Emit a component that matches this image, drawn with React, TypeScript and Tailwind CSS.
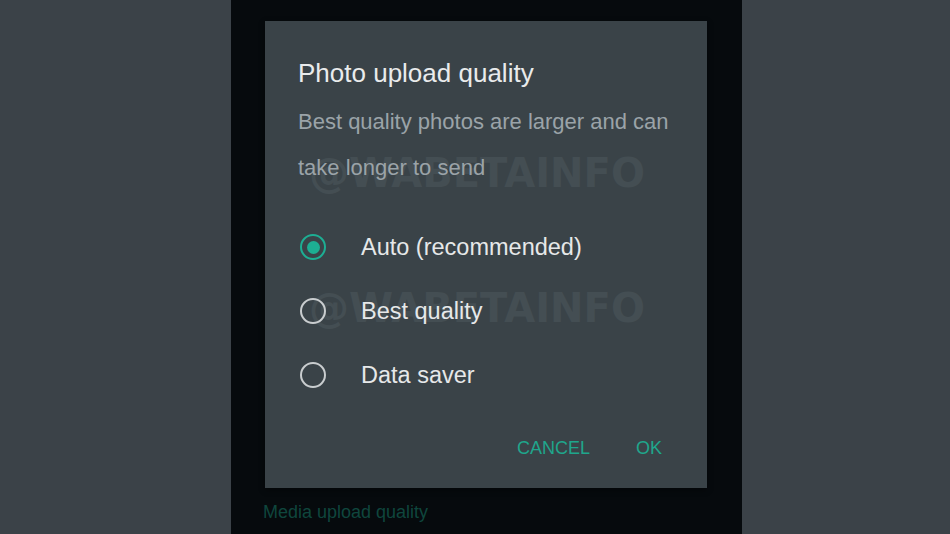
import { useState } from 'react';

const options = ['Auto (recommended)', 'Best quality', 'Data saver'];

function Radio({ checked }: { checked: boolean }) {
  return (
    <div
      className={
        'flex h-[26px] w-[26px] items-center justify-center rounded-full border-[2.5px] ' +
        (checked ? 'border-[#1dae93]' : 'border-[#c9cdcf]')
      }
    >
      {checked && <div className="h-[13px] w-[13px] rounded-full bg-[#1dae93]" />}
    </div>
  );
}

export default function App() {
  const [selected, setSelected] = useState(0);

  return (
    <div
      className="flex h-[534px] w-[950px] overflow-hidden bg-[#3b4248]"
      style={{ fontFamily: '"Liberation Sans", Arial, sans-serif' }}
    >
      <div className="w-[231px] shrink-0" />

      {/* phone screen */}
      <div className="flex w-[511px] shrink-0 flex-col bg-[#060a0d] pt-[21px]">
        <div className="relative ml-[34px] h-[467px] w-[442px] overflow-hidden bg-[#3a4348] pl-[33px] pr-[45px] pt-[36px] shadow-[0_2px_6px_rgba(0,0,0,0.4)]">
          {/* watermarks */}
          <div className="pointer-events-none absolute left-[44px] top-[127px] select-none text-[40px] font-bold leading-[50px] text-[#444e53]" style={{ fontFamily: '"DejaVu Sans", sans-serif' }}>
            @WABETAINFO
          </div>
          <div className="pointer-events-none absolute left-[44px] top-[262px] select-none text-[40px] font-bold leading-[50px] text-[#444e53]" style={{ fontFamily: '"DejaVu Sans", sans-serif' }}>
            @WABETAINFO
          </div>

          <div className="relative">
            <h2 className="text-[26px] leading-[32px] text-[#e9ebec]">Photo upload quality</h2>
            <p className="mt-[10px] w-[385px] text-[22px] leading-[46px] text-[#9ba3a8]">
              Best quality photos are larger and can take longer to send
            </p>

            <div className="mt-[24px] flex flex-col">
              {options.map((opt, i) => (
                <button
                  key={opt}
                  onClick={() => setSelected(i)}
                  className="flex h-[64px] items-center text-left"
                >
                  <div className="ml-[2px] w-[61px]">
                    <Radio checked={selected === i} />
                  </div>
                  <span className="text-[23.5px] leading-[64px] text-[#e6e8e9]">{opt}</span>
                </button>
              ))}
            </div>

            <div className="mt-[29px] flex justify-end gap-[46px]">
              <button className="text-[18px] leading-[24px] text-[#1fa68c]">CANCEL</button>
              <button className="text-[18px] leading-[24px] text-[#1fa68c]">OK</button>
            </div>
          </div>
        </div>

        <div className="ml-[32px] mt-[12px] text-[18px] leading-[24px] text-[#0f463d]">
          Media upload quality
        </div>
      </div>

      <div className="flex-1" />
    </div>
  );
}
